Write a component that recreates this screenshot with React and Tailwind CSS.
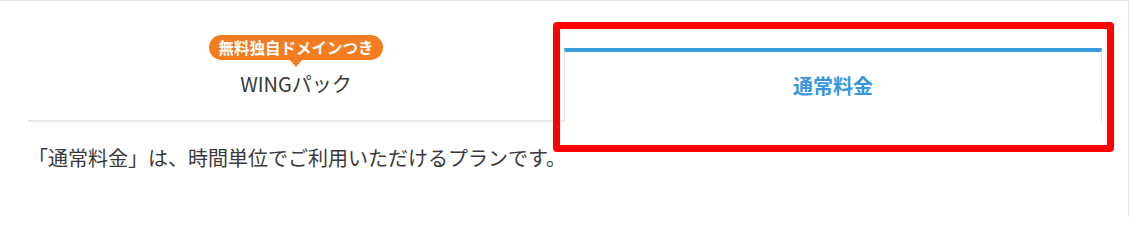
const font = { fontFamily: '"Noto Sans CJK JP", "Noto Sans", sans-serif' }

const PlanTabs = () => {
  return (
    <div className="relative w-[1129px] h-[217px] bg-white border-t border-r border-[#e3e3e3]" style={font}>
      <div className="pl-[28px] w-[1102px]">
        {/* tab row */}
        <div className="mt-[34px] flex items-end">
          <div className="flex-1 flex flex-col items-center border-b-2 border-[#e6e6e6] pb-[22px]">
            <div className="relative mb-[10px]">
              <span className="block h-[25px] px-[9px] rounded-full bg-[#f47c20] text-white font-bold text-[15.5px] leading-[25px]">
                無料独自ドメインつき
              </span>
              <span className="absolute left-1/2 -translate-x-1/2 top-full w-0 h-0 border-l-[6px] border-r-[6px] border-t-[7px] border-l-transparent border-r-transparent border-t-[#f47c20]" />
            </div>
            <div className="text-[20px] leading-[28px] text-[#3a3a3a]">WINGパック</div>
          </div>
          <div className="w-[538px] h-[74px] flex items-center justify-center border-t-4 border-t-[#3b9be0] border-x border-x-[#e3e3e3] pb-[2px]">
            <span className="text-[20px] font-bold text-[#3a96dc] leading-[28px]">通常料金</span>
          </div>
        </div>
        <p className="mt-[22px] text-[20px] leading-[28px] text-[#3a3a3a]">
          「通常料金」は、時間単位でご利用いただけるプランです。
        </p>
      </div>
      {/* annotation frame */}
      <div className="absolute left-[553px] top-[21px] w-[561px] h-[130px] border-[7px] border-[#ff0000] rounded-[4px]" />
    </div>
  )
}

export default function App() {
  return <PlanTabs />
}
